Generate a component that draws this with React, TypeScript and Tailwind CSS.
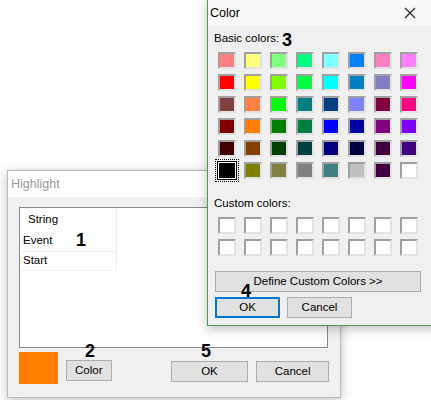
import React from 'react';

const BASIC = [
  ['#ff8080', '#ffff80', '#80ff80', '#00ff80', '#80ffff', '#0080ff', '#ff80c0', '#ff80ff'],
  ['#ff0000', '#ffff00', '#80ff00', '#00ff40', '#00ffff', '#0080c0', '#8080c0', '#ff00ff'],
  ['#804040', '#ff8040', '#00ff00', '#008080', '#004080', '#8080ff', '#800040', '#ff0080'],
  ['#800000', '#ff8000', '#008000', '#008040', '#0000ff', '#0000a0', '#800080', '#8000ff'],
  ['#400000', '#804000', '#004000', '#004040', '#000080', '#000040', '#400040', '#400080'],
  ['#000000', '#808000', '#808040', '#808080', '#408080', '#c0c0c0', '#400040', '#ffffff'],
];

const font = { fontFamily: '"Liberation Sans", Arial, sans-serif' };

function Swatch({ color, selected }: { color: string; selected?: boolean }) {
  if (selected) {
    // focus: dotted rectangle + black/white frame
    return (
      <div className="w-[18px] h-[17px] relative">
        <div className="absolute -inset-[3px] border border-dotted border-black" />
        <div className="absolute -inset-[1px] border border-black bg-white p-[1px]">
          <div className="w-full h-full border border-black" style={{ background: color }} />
        </div>
      </div>
    );
  }
  return (
    <div
      className="w-[18px] h-[17px] border-2 border-t-[#a0a0a0] border-l-[#a0a0a0] border-b-[#e3e3e3] border-r-[#e3e3e3]"
      style={{ background: color }}
    />
  );
}

function WinButton({ children, className = '' }: { children: React.ReactNode; className?: string }) {
  return (
    <button className={`h-[21px] bg-[#e1e1e1] border border-[#adadad] text-[11.5px] text-black flex items-center justify-center ${className}`}>
      {children}
    </button>
  );
}

function Mark({ n, className }: { n: string; className: string }) {
  return (
    <span className={`absolute text-[18px] font-bold leading-none text-black ${className}`}>
      {n}
    </span>
  );
}

export default function App() {
  return (
    <div className="relative w-[431px] h-[400px] bg-white overflow-hidden" style={font}>
      {/* Highlight window */}
      <div className="absolute left-[7px] top-[170px] w-[334px] h-[228px] border border-[#b9b9b9] bg-[#f0f0f0] shadow-[0_2px_10px_rgba(0,0,0,0.25)] flex flex-col">
        <div className="h-[26px] bg-white flex items-center pl-[3px] text-[12.5px] text-[#9a9a9a]">Highlight</div>
        <div className="flex-1 px-[11px] pt-[10px]">
          <div className="w-[309px] h-[141px] bg-white border border-[#828790] pt-[1px] pl-[1px]">
            <div className="w-[96px] text-[11.5px] text-black">
              <div className="h-[22px] flex items-center pl-[7px] border-r border-[#f0f0f0]">String</div>
              <div className="h-[21px] flex items-center pl-[2px] border-r border-b border-[#f0f0f0]">Event</div>
              <div className="h-[19px] flex items-center pl-[2px] border-r border-b border-[#f0f0f0]">Start</div>
            </div>
          </div>
          <div className="flex items-start mt-[4px]">
            <div className="w-[39px] h-[32px] bg-[#ff8000]" />
            <WinButton className="w-[46px] ml-[8px] mt-[8px]">Color</WinButton>
            <WinButton className="w-[78px] ml-[59px] mt-[9px]">OK</WinButton>
            <WinButton className="w-[73px] ml-[8px] mt-[9px]">Cancel</WinButton>
          </div>
        </div>
      </div>

      {/* Color dialog */}
      <div className="absolute left-[207px] top-[-1px] w-[240px] h-[327px] border border-[#4f9a4f] bg-[#f0f0f0] shadow-[0_3px_10px_rgba(0,0,0,0.25)] flex flex-col">
        <div className="h-[26px] bg-[#f9f9f9] flex items-center justify-between pl-[2px]">
          <span className="text-[12.5px] text-black">Color</span>
          <svg className="mr-[30px]" width="12" height="12" viewBox="0 0 12 12">
            <path d="M1 1 L11 11 M11 1 L1 11" stroke="#222" strokeWidth="1.1" />
          </svg>
        </div>
        <div className="pl-[6px] pt-[7px]">
          <div className="text-[11.5px] text-black leading-none h-[14px]">Basic colors:</div>
          <div className="grid grid-cols-[repeat(8,18px)] gap-x-[8px] gap-y-[5px] ml-[4px] mt-[5px]">
            {BASIC.flat().map((c, i) => (
              <Swatch key={i} color={c} selected={i === 40} />
            ))}
          </div>
          <div className="text-[11.5px] text-black leading-none h-[14px] mt-[19px]">Custom colors:</div>
          <div className="grid grid-cols-[repeat(8,18px)] gap-x-[8px] gap-y-[5px] ml-[4px] mt-[5px]">
            {Array.from({ length: 16 }).map((_, i) => (
              <Swatch key={i} color="#ffffff" />
            ))}
          </div>
          <WinButton className="w-[206px] ml-[1px] mt-[15px]">Define Custom Colors &gt;&gt;</WinButton>
          <div className="flex mt-[5px] ml-[1px]">
            <WinButton className="w-[65px] !border-2 !border-[#0078d7]">OK</WinButton>
            <WinButton className="w-[65px] ml-[7px]">Cancel</WinButton>
          </div>
        </div>
      </div>

      <Mark n="1" className="left-[76px] top-[231px]" />
      <Mark n="2" className="left-[85px] top-[342px]" />
      <Mark n="3" className="left-[282px] top-[31px]" />
      <Mark n="4" className="left-[241px] top-[282px]" />
      <Mark n="5" className="left-[201px] top-[342px]" />
    </div>
  );
}
